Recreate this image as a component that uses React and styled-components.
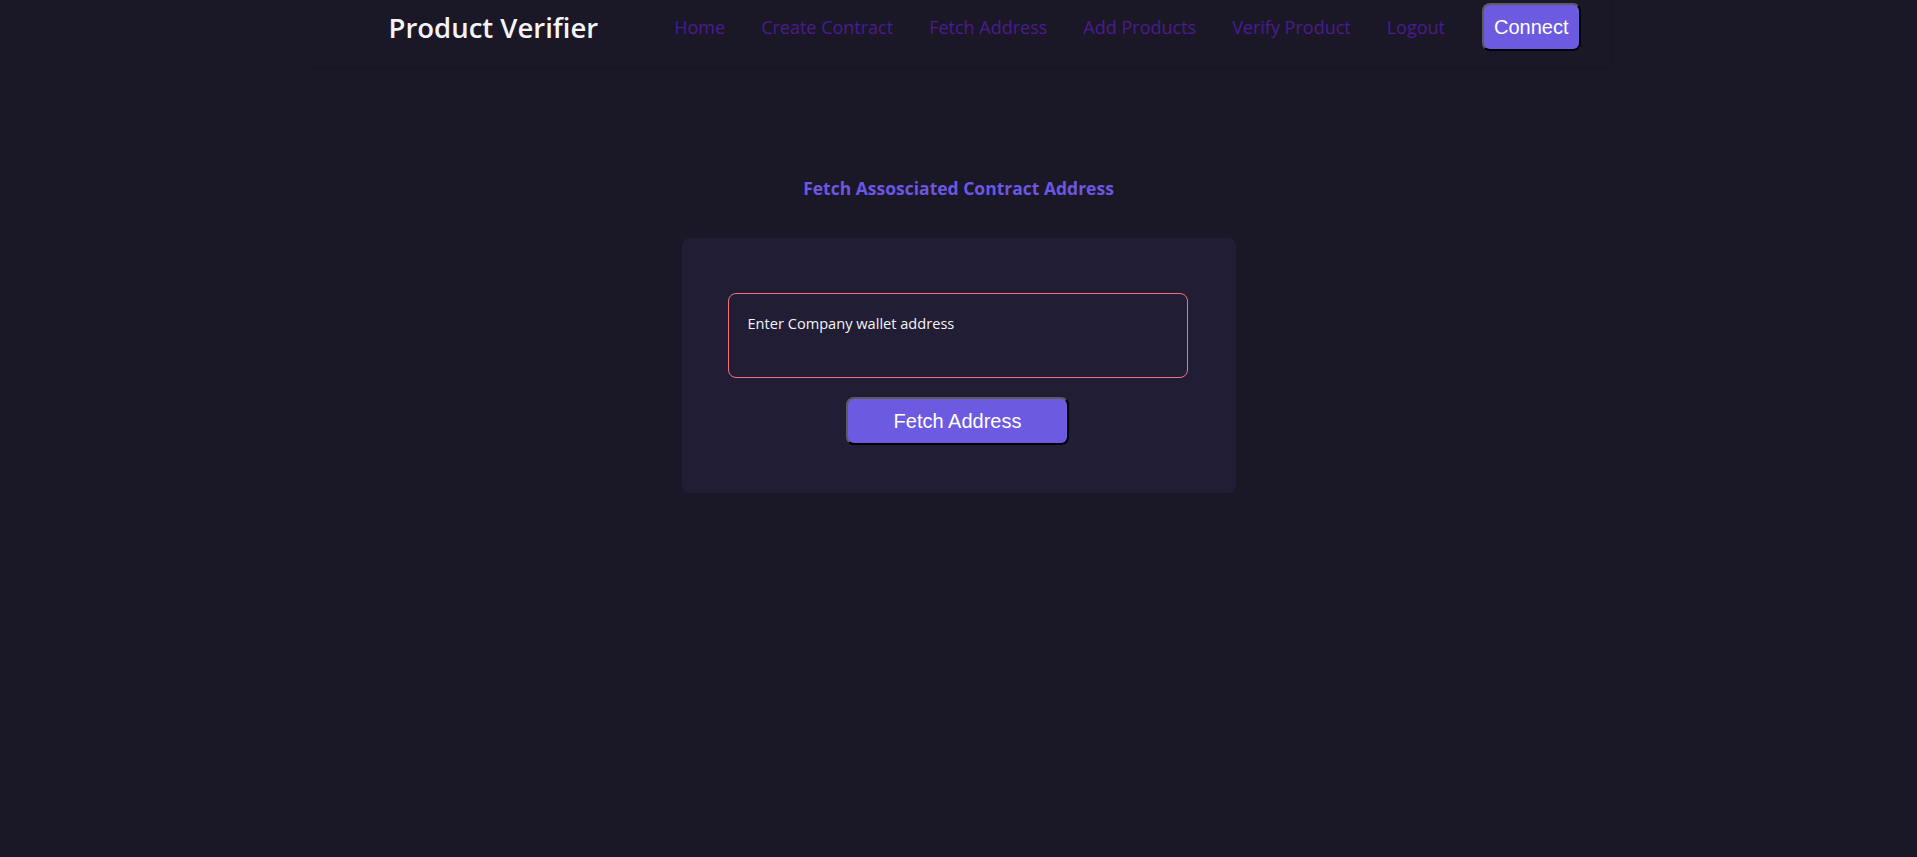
import styled, { createGlobalStyle } from 'styled-components';

const GlobalStyle = createGlobalStyle`
  * {
    box-sizing: border-box;
  }
  body {
    margin: 0;
    background: #1a1727;
    font-family: 'Open Sans', 'Noto Sans', sans-serif;
    min-height: 100vh;
  }
`;

const links = ['Home', 'Create Contract', 'Fetch Address', 'Add Products', 'Verify Product', 'Logout'];

const App = () => {
  return (
    <Page>
      <GlobalStyle />
      <Header>
        <Logo>Product Verifier</Logo>
        <Nav>
          {links.map(link => (
            <NavLink key={link} href="#">
              {link}
            </NavLink>
          ))}
        </Nav>
        <Button $small>Connect</Button>
      </Header>

      <Main>
        <Title>Fetch Assosciated Contract Address</Title>
        <Card>
          <AddressInput placeholder="Enter Company wallet address" />
          <Button>Fetch Address</Button>
        </Card>
      </Main>
    </Page>
  );
};

export default App;

const Page = styled.div`
  min-height: 100vh;
  background: #1a1727;
`;

const Header = styled.header`
  width: 1304px;
  height: 67px;
  margin: 0 auto;
  display: flex;
  align-items: flex-start;
  padding: 3px 30px 0 82px;
  box-shadow: 0 1px 2px rgba(0, 0, 0, 0.12);
`;

const Logo = styled.h1`
  margin: 0;
  height: 48px;
  display: flex;
  align-items: center;
  color: #f4f4f8;
  font-size: 27.5px;
  font-weight: 600;
`;

const Nav = styled.nav`
  margin-left: auto;
  margin-right: 37px;
  height: 48px;
  display: flex;
  align-items: center;
  gap: 36px;
`;

const NavLink = styled.a`
  color: #4a1c8f;
  font-size: 18px;
  text-decoration: none;
`;

const Button = styled.button`
  font-family: 'Liberation Sans', Arial, sans-serif;
  font-size: 20px;
  color: #ffffff;
  background: #6c5ae0;
  border: 2px solid;
  border-color: #5c5c5c #000 #000 #5c5c5c;
  border-radius: 8px;
  height: 48px;
  padding: 0 ${p => (p.$small ? '10px' : '46px')};
  cursor: pointer;
`;

const Main = styled.main`
  display: flex;
  flex-direction: column;
  align-items: center;
  padding-top: 109px;
`;

const Title = styled.h3`
  margin: 0 0 38px;
  color: #6b57e2;
  font-size: 17.5px;
  font-weight: 700;
  line-height: 24px;
`;

const Card = styled.div`
  width: 554px;
  background: #211d35;
  border-radius: 8px;
  padding: 55px 48px 48px 46px;
  display: flex;
  flex-direction: column;
  align-items: center;
  gap: 19px;
`;

const AddressInput = styled.textarea`
  width: 100%;
  height: 85px;
  resize: none;
  background: transparent;
  border: 1px solid #f2737a;
  border-radius: 8px;
  padding: 19px 19px;
  font-family: 'Open Sans', 'Noto Sans', sans-serif;
  font-size: 14.6px;
  color: #fff;
  outline: none;
  &::placeholder {
    color: #f4f4f8;
    opacity: 1;
  }
`;
